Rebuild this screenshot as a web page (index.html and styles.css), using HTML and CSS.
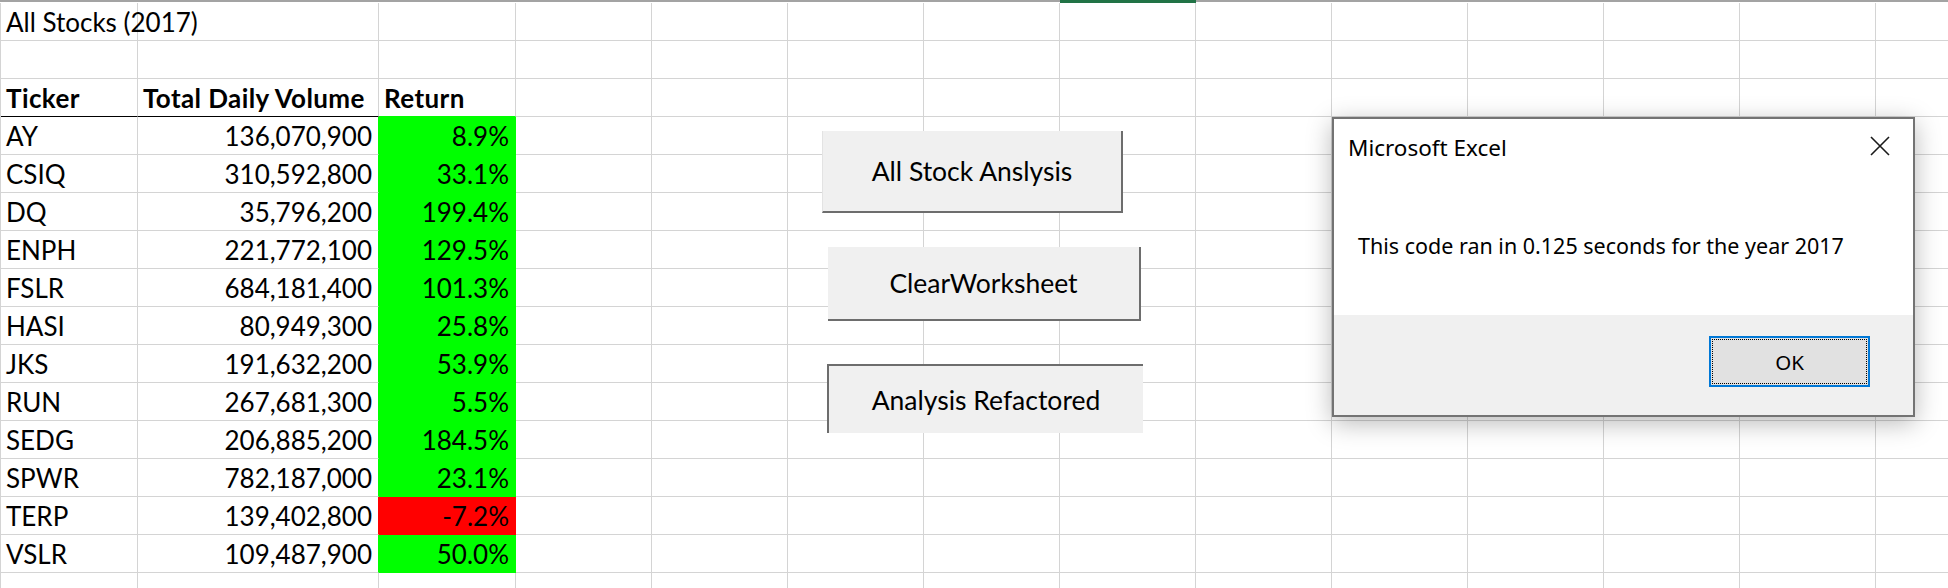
FILE: index.html
```html
<!DOCTYPE html>
<html>
<head>
<meta charset="utf-8">
<title>All Stocks (2017)</title>
<link rel="stylesheet" href="styles.css">
</head>
<body>
<div class="sheet">
  <div class="strip"><div class="sel"></div></div>
  <div class="grid">
    <!-- row 1 -->
    <div class="c">All Stocks (2017)</div><div class="c"></div><div class="c"></div>
    <div class="c"></div><div class="c"></div><div class="c"></div><div class="c"></div><div class="c"></div><div class="c"></div><div class="c"></div><div class="c"></div><div class="c"></div><div class="c"></div><div class="c"></div>
    <!-- row 2 -->
    <div class="c"></div><div class="c"></div><div class="c"></div>
    <div class="c"></div><div class="c"></div><div class="c"></div><div class="c"></div><div class="c"></div><div class="c"></div><div class="c"></div><div class="c"></div><div class="c"></div><div class="c"></div><div class="c"></div>
    <!-- row 3 -->
    <div class="c h hb">Ticker</div><div class="c h hb">Total Daily Volume</div><div class="c h up">Return</div>
    <div class="c"></div><div class="c"></div><div class="c"></div><div class="c"></div><div class="c"></div><div class="c"></div><div class="c"></div><div class="c"></div><div class="c"></div><div class="c"></div><div class="c"></div>
    <!-- AY -->
    <div class="c">AY</div><div class="c n pos">136,070,900</div><div class="c n g">8.9%</div>
    <div class="c"></div><div class="c"></div><div class="c"></div><div class="c"></div><div class="c"></div><div class="c"></div><div class="c"></div><div class="c"></div><div class="c"></div><div class="c"></div><div class="c"></div>
    <!-- CSIQ -->
    <div class="c">CSIQ</div><div class="c n pos">310,592,800</div><div class="c n g">33.1%</div>
    <div class="c"></div><div class="c"></div><div class="c"></div><div class="c"></div><div class="c"></div><div class="c"></div><div class="c"></div><div class="c"></div><div class="c"></div><div class="c"></div><div class="c"></div>
    <!-- DQ -->
    <div class="c">DQ</div><div class="c n pos">35,796,200</div><div class="c n g">199.4%</div>
    <div class="c"></div><div class="c"></div><div class="c"></div><div class="c"></div><div class="c"></div><div class="c"></div><div class="c"></div><div class="c"></div><div class="c"></div><div class="c"></div><div class="c"></div>
    <!-- ENPH -->
    <div class="c">ENPH</div><div class="c n pos">221,772,100</div><div class="c n g">129.5%</div>
    <div class="c"></div><div class="c"></div><div class="c"></div><div class="c"></div><div class="c"></div><div class="c"></div><div class="c"></div><div class="c"></div><div class="c"></div><div class="c"></div><div class="c"></div>
    <!-- FSLR -->
    <div class="c">FSLR</div><div class="c n pos">684,181,400</div><div class="c n g">101.3%</div>
    <div class="c"></div><div class="c"></div><div class="c"></div><div class="c"></div><div class="c"></div><div class="c"></div><div class="c"></div><div class="c"></div><div class="c"></div><div class="c"></div><div class="c"></div>
    <!-- HASI -->
    <div class="c">HASI</div><div class="c n pos">80,949,300</div><div class="c n g">25.8%</div>
    <div class="c"></div><div class="c"></div><div class="c"></div><div class="c"></div><div class="c"></div><div class="c"></div><div class="c"></div><div class="c"></div><div class="c"></div><div class="c"></div><div class="c"></div>
    <!-- JKS -->
    <div class="c">JKS</div><div class="c n pos">191,632,200</div><div class="c n g">53.9%</div>
    <div class="c"></div><div class="c"></div><div class="c"></div><div class="c"></div><div class="c"></div><div class="c"></div><div class="c"></div><div class="c"></div><div class="c"></div><div class="c"></div><div class="c"></div>
    <!-- RUN -->
    <div class="c">RUN</div><div class="c n pos">267,681,300</div><div class="c n g">5.5%</div>
    <div class="c"></div><div class="c"></div><div class="c"></div><div class="c"></div><div class="c"></div><div class="c"></div><div class="c"></div><div class="c"></div><div class="c"></div><div class="c"></div><div class="c"></div>
    <!-- SEDG -->
    <div class="c">SEDG</div><div class="c n pos">206,885,200</div><div class="c n g">184.5%</div>
    <div class="c"></div><div class="c"></div><div class="c"></div><div class="c"></div><div class="c"></div><div class="c"></div><div class="c"></div><div class="c"></div><div class="c"></div><div class="c"></div><div class="c"></div>
    <!-- SPWR -->
    <div class="c">SPWR</div><div class="c n pos">782,187,000</div><div class="c n g">23.1%</div>
    <div class="c"></div><div class="c"></div><div class="c"></div><div class="c"></div><div class="c"></div><div class="c"></div><div class="c"></div><div class="c"></div><div class="c"></div><div class="c"></div><div class="c"></div>
    <!-- TERP -->
    <div class="c">TERP</div><div class="c n neg">139,402,800</div><div class="c n r">-7.2%</div>
    <div class="c"></div><div class="c"></div><div class="c"></div><div class="c"></div><div class="c"></div><div class="c"></div><div class="c"></div><div class="c"></div><div class="c"></div><div class="c"></div><div class="c"></div>
    <!-- VSLR -->
    <div class="c">VSLR</div><div class="c n pos">109,487,900</div><div class="c n g">50.0%</div>
    <div class="c"></div><div class="c"></div><div class="c"></div><div class="c"></div><div class="c"></div><div class="c"></div><div class="c"></div><div class="c"></div><div class="c"></div><div class="c"></div><div class="c"></div>
    <!-- row 16 -->
    <div class="c"></div><div class="c"></div><div class="c"></div>
    <div class="c"></div><div class="c"></div><div class="c"></div><div class="c"></div><div class="c"></div><div class="c"></div><div class="c"></div><div class="c"></div><div class="c"></div><div class="c"></div><div class="c"></div>
  </div>
</div>

<div class="btn b1">All Stock Anslysis</div>
<div class="btn b2">ClearWorksheet</div>
<div class="btn b3">Analysis Refactored</div>

<div class="dlg">
  <div class="dlg-body">
    <div class="dlg-head">
      <span class="dlg-title">Microsoft Excel</span>
      <svg class="dlg-x" viewBox="0 0 20 20" width="20" height="20"><path d="M1 1L19 19M19 1L1 19" fill="none" stroke="#1a1a1a" stroke-width="1.6"/></svg>
    </div>
    <p class="dlg-msg">This code ran in 0.125 seconds for the year 2017</p>
  </div>
  <div class="dlg-foot">
    <button class="ok"><span class="ok-in">OK</span></button>
  </div>
</div>
</body>
</html>
```
FILE: styles.css
```css
html, body {
  margin: 0;
  padding: 0;
  background: #fff;
}
body {
  position: relative;
  width: 1948px;
  height: 588px;
  overflow: hidden;
  font-family: Lato, "Liberation Sans", sans-serif;
  color: #000;
}

/* ---------- sheet ---------- */
.strip {
  display: grid;
  grid-template-columns: 137px 241px 137px repeat(11, 136px);
  height: 3px;
  padding-left: 1px;
  background: linear-gradient(#a3a3a3 0 2px, #fff 2px);
}
.sel {
  grid-column: 8;
  background: #217346;
}
.grid {
  display: grid;
  grid-template-columns: 137px 241px 137px repeat(11, 136px);
  grid-auto-rows: 38px;
  border-left: 1px solid #d4d4d4;
}
.c {
  box-sizing: border-box;
  border-right: 1px solid #d4d4d4;
  border-bottom: 1px solid #d4d4d4;
  display: flex;
  align-items: flex-end;
  padding: 0 6px 3px 5px;
  font-size: 26px;
  line-height: 30px;
  white-space: nowrap;
  min-width: 0;
}
.n { justify-content: flex-end; }
.h { font-weight: 700; letter-spacing: 0.4px; }
.hb { border-bottom-color: #000; }
.up { border-bottom-color: #00ff00; }
.pos { border-right-color: #00ff00; }
.neg { border-right-color: #ff0000; }
.g { background: #00ff00; border-color: #00ff00; }
.r { background: #ff0000; border-color: #ff0000; }

/* ---------- form buttons (float over the sheet) ---------- */
.btn {
  position: absolute;
  box-sizing: border-box;
  display: flex;
  align-items: center;
  justify-content: center;
  background: #f0f0f0;
  font-size: 26.5px;
  line-height: 30px;
  color: #000;
}
.b1 {
  left: 822px; top: 131px; width: 301px; height: 82px;
  border-right: 2px solid #6d6d6d;
  border-bottom: 2px solid #6d6d6d;
  border-left: 1px solid #e3e3e3;
}
.b2 {
  left: 828px; top: 247px; width: 313px; height: 74px;
  border-right: 2px solid #6d6d6d;
  border-bottom: 2px solid #6d6d6d;
}
.b3 {
  left: 827px; top: 364px; width: 316px; height: 69px;
  border-top: 2px solid #6d6d6d;
  border-left: 2px solid #6d6d6d;
}

/* ---------- message box ---------- */
.dlg {
  position: absolute;
  left: 1332px;
  top: 117px;
  width: 583px;
  height: 300px;
  box-sizing: border-box;
  border: 2px solid #737373;
  background: #fff;
  box-shadow: 0 6px 24px rgba(0, 0, 0, 0.28);
  display: flex;
  flex-direction: column;
  font-family: "Noto Sans", "Open Sans", sans-serif;
  color: #000;
}
.dlg-body {
  height: 196px;
  box-sizing: border-box;
  padding: 14px 0 0 14px;
}
.dlg-head {
  display: flex;
  justify-content: space-between;
  align-items: flex-start;
  padding-right: 23px;
}
.dlg-title {
  font-size: 22.5px;
  line-height: 30px;
}
.dlg-x {
  margin-top: 3px;
  display: block;
}
.dlg-msg {
  margin: 68px 0 0 10px;
  font-size: 21.5px;
  line-height: 30px;
}
.dlg-foot {
  flex: 1;
  background: #f0f0f0;
  display: flex;
  justify-content: flex-end;
  align-items: flex-start;
  padding: 21px 43px 0 0;
}
.ok {
  width: 161px;
  height: 51px;
  box-sizing: border-box;
  border: 2px solid #0078d7;
  background: #e1e1e1;
  padding: 1px;
  margin: 0;
  font-family: "Noto Sans", "Open Sans", sans-serif;
  font-size: 20.5px;
  color: #000;
}
.ok-in {
  display: flex;
  align-items: center;
  justify-content: center;
  height: 100%;
  box-sizing: border-box;
  border: 1px dotted #000;
}
```
